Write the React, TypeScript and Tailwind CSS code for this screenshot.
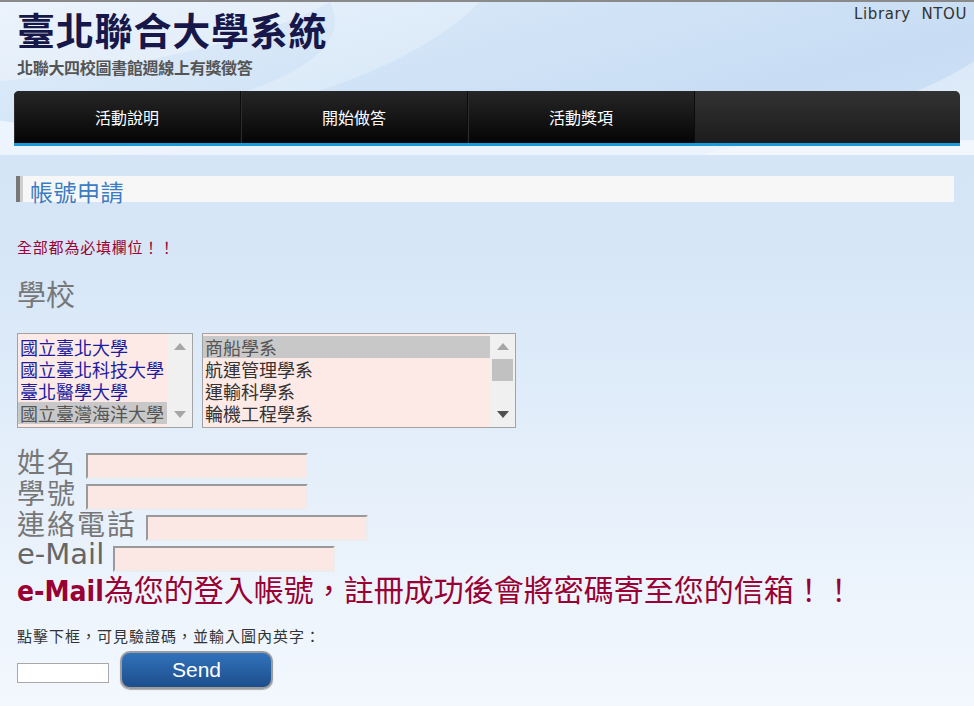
import React from "react";

function Arrow({ up, dark }: { up?: boolean; dark?: boolean }) {
  return (
    <svg width="12" height="7" viewBox="0 0 12 7">
      <polygon
        points={up ? "6,0 12,7 0,7" : "0,0 12,0 6,7"}
        fill={dark ? "#505050" : "#a6a6a6"}
      />
    </svg>
  );
}

function ListBox({
  items,
  selected,
  width,
  textColor,
  thumb,
}: {
  items: string[];
  selected: number;
  width: string;
  textColor: string;
  thumb?: boolean;
}) {
  return (
    <div className={`${width} h-[95px] border border-[#a3a3a3] bg-[#f0f0f0] flex`}>
      <div className="flex-1 bg-[#fde9e6] pt-[2px]">
        {items.map((it, i) => (
          <div
            key={it}
            className={`h-[22px] leading-[22px] text-[18px] pl-[2px] whitespace-nowrap ${
              i === selected ? "bg-[#c8c8c8] text-[#555]" : textColor
            }`}
          >
            {it}
          </div>
        ))}
      </div>
      <div className="w-[25px] flex flex-col items-center justify-between py-[9px] relative">
        <Arrow up />
        {thumb && (
          <div className="absolute left-[2px] top-[25px] w-[21px] h-[22px] bg-[#c1c1c1]" />
        )}
        <Arrow dark={thumb} />
      </div>
    </div>
  );
}

function Field({ label, mail }: { label: string; mail?: boolean }) {
  return (
    <div className="h-[31px] flex items-start">
      <span
        className={
          mail
            ? "text-[29px] leading-[31px] text-[#666] font-['DejaVu_Sans',sans-serif]"
            : "text-[28px] leading-[31px] tracking-[2px] text-[#777]"
        }
      >
        {label}
      </span>
      <div className="ml-[9px] mt-[7px] w-[222px] h-[26px] bg-[#fbe8e5] border-2 border-t-[#9a9a9a] border-l-[#9a9a9a] border-r-[#ececec] border-b-[#ececec] shrink-0" />
    </div>
  );
}

export default function App() {
  const tabs = ["活動說明", "開始做答", "活動獎項"];
  return (
    <div className="min-h-[706px] w-full relative overflow-hidden bg-[linear-gradient(180deg,#d3e4f6_0px,#d6e6f7_250px,#e8f1fb_520px,#f3f8fe_706px)] font-['Noto_Sans_CJK_TC','Noto_Sans',sans-serif]">
      {/* header */}
      <div className="relative h-[155px] border-t-2 border-[#8a8a8a] bg-[linear-gradient(165deg,#e3eefa_0%,#d3e5f7_35%,#c8ddf4_70%,#cfe2f6_100%)]">
        <svg
          className="absolute inset-0 w-full h-full"
          viewBox="0 0 974 155"
          preserveAspectRatio="none"
        >
          <path d="M0,0 L330,0 C260,40 120,70 0,80 Z" fill="#ffffff" opacity="0.3" />
          <path d="M330,0 L480,0 C420,60 300,120 0,150 L0,140 C250,110 360,60 330,0 Z" fill="#ffffff" opacity="0.25" />
          <path d="M0,155 L0,120 C200,150 420,140 974,140 L974,155 Z" fill="#eef5fd" opacity="0.9" />
          <path d="M700,155 C850,120 930,90 974,60 L974,155 Z" fill="#ffffff" opacity="0.35" />
        </svg>
        <div className="relative pl-[17px] pt-[4px]">
          <h1 className="text-[38px] leading-[46px] font-bold tracking-[0.8px] text-[#17174a]">臺北聯合大學系統</h1>
          <p className="mt-[5px] text-[16px] leading-[20px] font-bold text-[#555] tracking-[-0.3px]">
            北聯大四校圖書館週線上有獎徵答
          </p>
        </div>
        <div className="absolute right-[7px] top-[1px] text-[15px] text-[#333] tracking-[0.6px] font-['DejaVu_Sans',sans-serif]">
          Library&nbsp;&nbsp;NTOU
        </div>
        <div className="relative ml-[14px] mt-[14px] w-[946px] h-[55px] rounded-t-[5px] overflow-hidden flex border-b-[3px] border-[#1b9ad9] bg-[linear-gradient(180deg,#323232,#1c1c1c)]">
          {tabs.map((t) => (
            <div
              key={t}
              className="w-[227px] h-full flex items-center justify-center text-white text-[16px] bg-[linear-gradient(180deg,#262626,#050505)] border-r border-[#0c0c0c] shadow-[inset_1px_0_0_#2c2c2c]"
            >
              {t}
            </div>
          ))}
        </div>
      </div>

      {/* section heading */}
      <div className="ml-[16px] mt-[21px] w-[938px] h-[26px] flex bg-[#f7f7f7]">
        <div className="w-[4px] bg-[#777]" />
        <div className="w-[3px] bg-[#cfcfcf]" />
        <div className="pl-[7px] text-[23px] leading-[30px] tracking-[0.5px] text-[#3b7dc4]">帳號申請</div>
      </div>

      <div className="pl-[17px]">
        <p className="mt-[35px] text-[15px] leading-[20px] tracking-[0.8px] text-[#990033]">全部都為必填欄位！！</p>
        <p className="mt-[19px] text-[29px] leading-[34px] text-[#777]">學校</p>

        <div className="mt-[23px] flex gap-[9px]">
          <ListBox
            width="w-[176px]"
            items={["國立臺北大學", "國立臺北科技大學", "臺北醫學大學", "國立臺灣海洋大學"]}
            selected={3}
            textColor="text-[#1c1ca0]"
          />
          <ListBox
            width="w-[314px]"
            items={["商船學系", "航運管理學系", "運輸科學系", "輪機工程學系"]}
            selected={0}
            textColor="text-[#333]"
            thumb
          />
        </div>

        <div className="mt-[18px]">
          <Field label="姓名" />
          <Field label="學號" />
          <Field label="連絡電話" />
          <Field label="e-Mail" mail />
        </div>

        <p className="mt-[1px] text-[30px] leading-[34px] text-[#990033] whitespace-nowrap">
          <span className="font-bold font-['DejaVu_Sans_Condensed','DejaVu_Sans',sans-serif] text-[28px]">e-Mail</span>
          為您的登入帳號，註冊成功後會將密碼寄至您的信箱！！
        </p>

        <p className="mt-[17px] text-[15px] leading-[20px] text-[#333] tracking-[1px]">
          點擊下框，可見驗證碼，並輸入圖內英字：
        </p>

        <div className="mt-[5px] flex items-center">
          <input
            className="mt-[6px] w-[92px] h-[20px] bg-white border border-[#a8a8a8] outline-none"
            type="text"
          />
          <button className="ml-[11px] w-[153px] h-[38px] rounded-[10px] border-2 border-[#9c9c9c] bg-[linear-gradient(180deg,#3172bb,#1d4e8c)] text-white text-[21px] font-['Liberation_Sans',sans-serif] shadow-[0_1px_1px_rgba(0,0,0,0.3)]">
            Send
          </button>
        </div>
      </div>
    </div>
  );
}
